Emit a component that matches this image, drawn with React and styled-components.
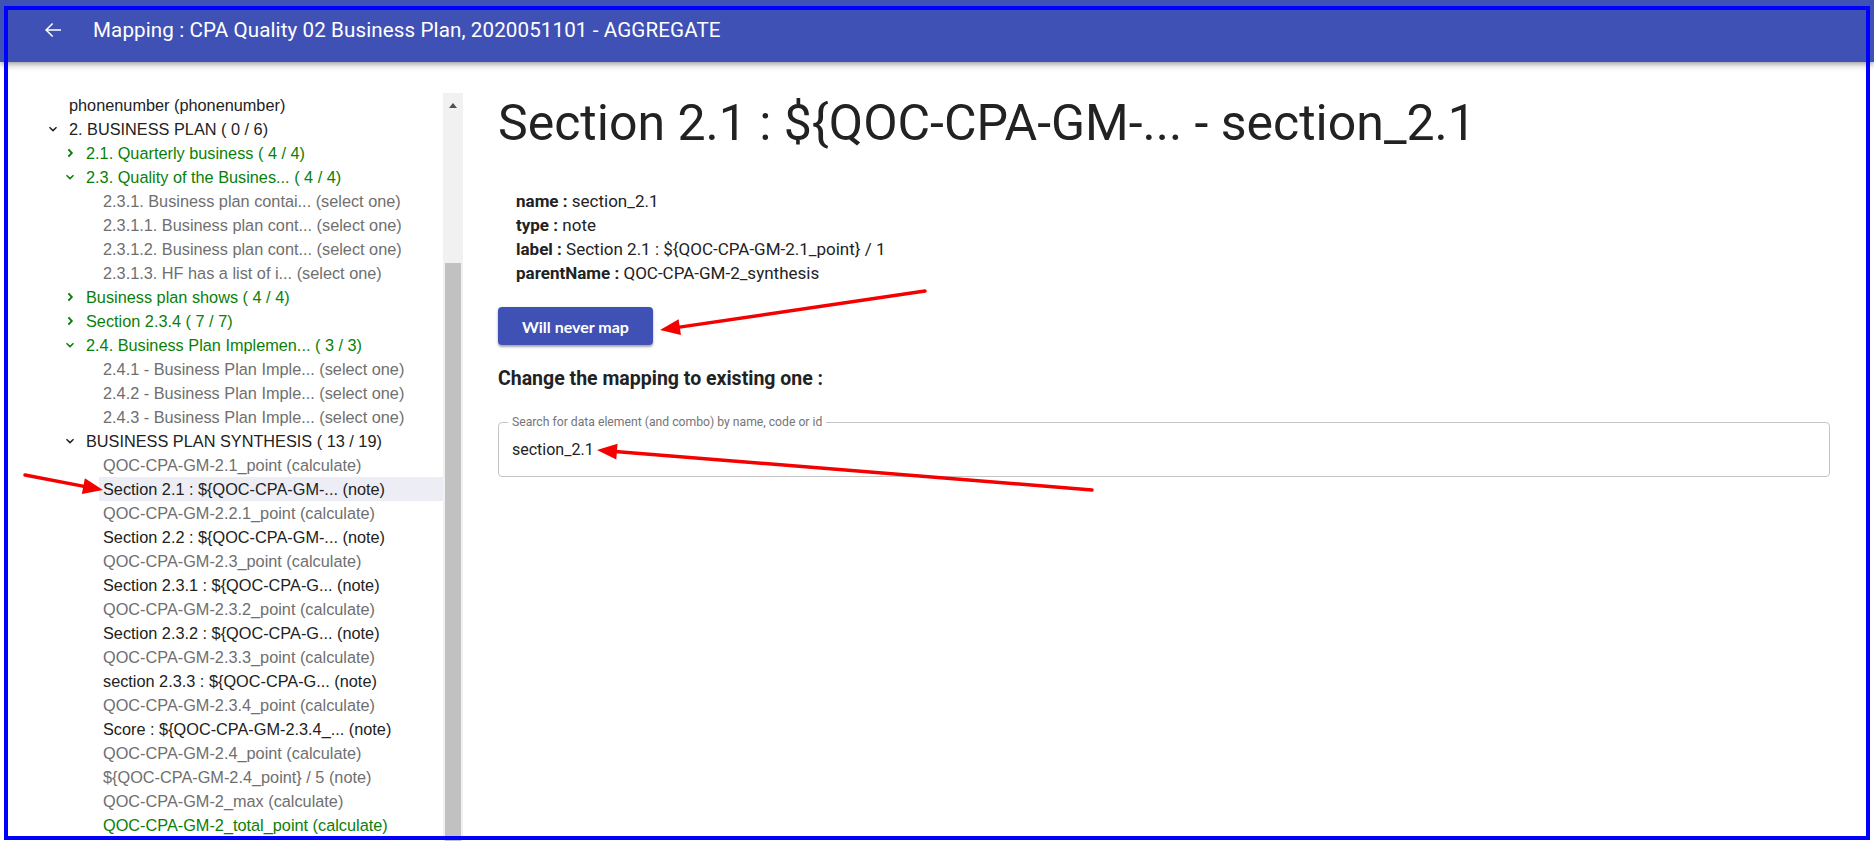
import React from 'react';
import styled, { createGlobalStyle } from 'styled-components';

const GlobalStyle = createGlobalStyle`
  html, body {
    margin: 0;
    padding: 0;
    height: 100%;
    overflow: hidden;
    background: #fff;
  }
`;

const treeRows = [
  { depth: 0, text: 'phonenumber (phonenumber)', tone: 'dark' },
  { depth: 0, text: '2. BUSINESS PLAN ( 0 / 6)', tone: 'dark', chevron: 'open' },
  { depth: 1, text: '2.1. Quarterly business ( 4 / 4)', tone: 'green', chevron: 'closed' },
  { depth: 1, text: '2.3. Quality of the Busines... ( 4 / 4)', tone: 'green', chevron: 'open' },
  { depth: 2, text: '2.3.1. Business plan contai... (select one)', tone: 'grey' },
  { depth: 2, text: '2.3.1.1. Business plan cont... (select one)', tone: 'grey' },
  { depth: 2, text: '2.3.1.2. Business plan cont... (select one)', tone: 'grey' },
  { depth: 2, text: '2.3.1.3. HF has a list of i... (select one)', tone: 'grey' },
  { depth: 1, text: 'Business plan shows ( 4 / 4)', tone: 'green', chevron: 'closed' },
  { depth: 1, text: 'Section 2.3.4 ( 7 / 7)', tone: 'green', chevron: 'closed' },
  { depth: 1, text: '2.4. Business Plan Implemen... ( 3 / 3)', tone: 'green', chevron: 'open' },
  { depth: 2, text: '2.4.1 - Business Plan Imple... (select one)', tone: 'grey' },
  { depth: 2, text: '2.4.2 - Business Plan Imple... (select one)', tone: 'grey' },
  { depth: 2, text: '2.4.3 - Business Plan Imple... (select one)', tone: 'grey' },
  { depth: 1, text: 'BUSINESS PLAN SYNTHESIS ( 13 / 19)', tone: 'dark', chevron: 'open' },
  { depth: 2, text: 'QOC-CPA-GM-2.1_point (calculate)', tone: 'grey' },
  { depth: 2, text: 'Section 2.1 : ${QOC-CPA-GM-... (note)', tone: 'dark', selected: true },
  { depth: 2, text: 'QOC-CPA-GM-2.2.1_point (calculate)', tone: 'grey' },
  { depth: 2, text: 'Section 2.2 : ${QOC-CPA-GM-... (note)', tone: 'dark' },
  { depth: 2, text: 'QOC-CPA-GM-2.3_point (calculate)', tone: 'grey' },
  { depth: 2, text: 'Section 2.3.1 : ${QOC-CPA-G... (note)', tone: 'dark' },
  { depth: 2, text: 'QOC-CPA-GM-2.3.2_point (calculate)', tone: 'grey' },
  { depth: 2, text: 'Section 2.3.2 : ${QOC-CPA-G... (note)', tone: 'dark' },
  { depth: 2, text: 'QOC-CPA-GM-2.3.3_point (calculate)', tone: 'grey' },
  { depth: 2, text: 'section 2.3.3 : ${QOC-CPA-G... (note)', tone: 'dark' },
  { depth: 2, text: 'QOC-CPA-GM-2.3.4_point (calculate)', tone: 'grey' },
  { depth: 2, text: 'Score : ${QOC-CPA-GM-2.3.4_... (note)', tone: 'dark' },
  { depth: 2, text: 'QOC-CPA-GM-2.4_point (calculate)', tone: 'grey' },
  { depth: 2, text: '${QOC-CPA-GM-2.4_point} / 5 (note)', tone: 'grey' },
  { depth: 2, text: 'QOC-CPA-GM-2_max (calculate)', tone: 'grey' },
  { depth: 2, text: 'QOC-CPA-GM-2_total_point (calculate)', tone: 'green' },
];

const details = [
  ['name', 'section_2.1'],
  ['type', 'note'],
  ['label', 'Section 2.1 : ${QOC-CPA-GM-2.1_point} / 1'],
  ['parentName', 'QOC-CPA-GM-2_synthesis'],
];

// red annotation arrows: tail -> tip
const arrows = [
  { from: [25, 475], to: [103, 490] },
  { from: [925, 291], to: [660, 330] },
  { from: [1092, 490], to: [597, 450] },
];

const toneColors = {
  dark: '#222222',
  green: '#0a7f0a',
  grey: '#6f6f6f',
};

const Chevron = ({ kind, tone }) => (
  <svg width="10" height="10" viewBox="0 0 10 10" aria-hidden="true">
    {kind === 'open' ? (
      <polyline points="1.5,3.2 5,6.6 8.5,3.2" fill="none" stroke={toneColors[tone]} strokeWidth="1.5" />
    ) : (
      <polyline points="3.4,1.4 6.8,5 3.4,8.6" fill="none" stroke={toneColors[tone]} strokeWidth="1.9" />
    )}
  </svg>
);

const Arrow = ({ from, to }) => {
  const [x1, y1] = from;
  const [x2, y2] = to;
  const len = Math.hypot(x2 - x1, y2 - y1);
  const ux = (x2 - x1) / len;
  const uy = (y2 - y1) / len;
  const bx = x2 - ux * 20;
  const by = y2 - uy * 20;
  const px = -uy * 8;
  const py = ux * 8;
  return (
    <g>
      <line x1={x1} y1={y1} x2={bx + ux * 2} y2={by + uy * 2} stroke="#f40000" strokeWidth="3.5" strokeLinecap="round" />
      <polygon points={`${x2},${y2} ${bx + px},${by + py} ${bx - px},${by - py}`} fill="#f40000" />
    </g>
  );
};

const App = () => (
  <Page>
    <GlobalStyle />
    <AppBar>
      <BackButton aria-label="back">
        <svg width="24" height="24" viewBox="0 0 24 24">
          <path d="M20 11.25H6.9l5.3-5.3-1.06-1.06L4 12l7.14 7.11 1.06-1.06-5.3-5.3H20z" fill="#fff" />
        </svg>
      </BackButton>
      <BarTitle>Mapping : CPA Quality 02 Business Plan, 2020051101 - AGGREGATE</BarTitle>
    </AppBar>

    <Main>
      <TreePanel>
        <TreeList>
          {treeRows.map((row, i) => (
            <TreeRow key={i} depth={row.depth}>
              <ChevronSlot>{row.chevron && <Chevron kind={row.chevron} tone={row.tone} />}</ChevronSlot>
              <RowLabel tone={row.tone} selected={row.selected}>
                {row.text}
              </RowLabel>
            </TreeRow>
          ))}
        </TreeList>
        <ScrollTrack>
          <ScrollArrow />
          <ScrollThumb />
        </ScrollTrack>
      </TreePanel>

      <Content>
        <Heading>{'Section 2.1 : ${QOC-CPA-GM-... - section_2.1'}</Heading>
        <DetailList>
          {details.map(([key, value]) => (
            <DetailLine key={key}>
              <strong>{key} :</strong> {value}
            </DetailLine>
          ))}
        </DetailList>
        <NeverMapButton type="button">Will never map</NeverMapButton>
        <SubTitle>Change the mapping to existing one :</SubTitle>
        <SearchField>
          <legend>Search for data element (and combo) by name, code or id</legend>
          <SearchValue>section_2.1</SearchValue>
        </SearchField>
      </Content>
    </Main>

    <Annotations width="1874" height="841">
      {arrows.map((a, i) => (
        <Arrow key={i} {...a} />
      ))}
    </Annotations>
    <Frame />
  </Page>
);

const Page = styled.div`
  position: relative;
  height: 100vh;
  display: flex;
  flex-direction: column;
  overflow: hidden;
  font-family: Roboto, "Liberation Sans", Arial, sans-serif;
`;

const AppBar = styled.header`
  height: 62px;
  flex-shrink: 0;
  display: flex;
  align-items: center;
  padding-left: 41px;
  gap: 28px;
  background: #3f51b5;
  color: #fff;
  box-shadow: 0 2px 4px -1px rgba(0, 0, 0, 0.2), 0 4px 5px 0 rgba(0, 0, 0, 0.14), 0 1px 10px 0 rgba(0, 0, 0, 0.12);
  position: relative;
  z-index: 1;
`;

const BackButton = styled.button`
  display: flex;
  padding: 0;
  border: none;
  background: transparent;
  margin-top: -2px;
`;

const BarTitle = styled.h1`
  margin: 0;
  margin-top: -2px;
  font-size: 20.6px;
  font-weight: 400;
  letter-spacing: 0.1px;
`;

const Main = styled.main`
  flex: 1;
  min-height: 0;
  display: flex;
`;

const TreePanel = styled.nav`
  width: 463px;
  flex-shrink: 0;
  margin-top: 31px;
  display: flex;
  overflow: hidden;
`;

const TreeList = styled.ul`
  flex: 1;
  margin: 0;
  padding: 0;
  list-style: none;
  font-family: "Liberation Sans", Arial, sans-serif;
  font-size: 16.3px;
`;

const TreeRow = styled.li`
  height: 24px;
  display: flex;
  align-items: center;
  padding-left: ${({ depth }) => 44 + depth * 17}px;
`;

const ChevronSlot = styled.span`
  width: 17px;
  flex-shrink: 0;
  display: flex;
  justify-content: center;
  margin-right: 4px;
`;

const RowLabel = styled.span`
  flex: 1;
  height: 24px;
  line-height: 24px;
  padding-left: 4px;
  white-space: nowrap;
  color: ${({ tone }) => toneColors[tone]};
  background: ${({ selected }) => (selected ? '#ededf5' : 'transparent')};
`;

const ScrollTrack = styled.div`
  width: 20px;
  flex-shrink: 0;
  background: #f1f1f1;
  display: flex;
  flex-direction: column;
  align-items: center;
`;

const ScrollArrow = styled.span`
  margin-top: 10px;
  width: 0;
  height: 0;
  border-left: 4.5px solid transparent;
  border-right: 4.5px solid transparent;
  border-bottom: 5px solid #505050;
`;

const ScrollThumb = styled.span`
  margin-top: 155px;
  width: 16px;
  flex: 1;
  background: #c1c1c1;
`;

const Content = styled.section`
  flex: 1;
  min-width: 0;
  padding: 33px 44px 0 35px;
  color: #212121;
`;

const Heading = styled.h2`
  margin: 0;
  font-size: 50px;
  font-weight: 400;
  line-height: 56px;
  color: #222;
`;

const DetailList = styled.div`
  margin-top: 38px;
  padding-left: 18px;
`;

const DetailLine = styled.div`
  font-size: 17px;
  line-height: 24px;
  color: #222;

  strong {
    font-weight: 700;
  }
`;

const NeverMapButton = styled.button`
  display: block;
  margin-top: 22px;
  width: 155px;
  height: 38px;
  border: none;
  border-radius: 4px;
  background: #3f51b5;
  color: #fff;
  font-family: Lato, "Liberation Sans", sans-serif;
  font-weight: 700;
  font-size: 16px;
  box-shadow: 0 2px 2px rgba(0, 0, 0, 0.28), 0 1px 4px rgba(0, 0, 0, 0.12);
`;

const SubTitle = styled.h3`
  margin: 22px 0 0;
  font-size: 19.5px;
  font-weight: 700;
  line-height: 24px;
  color: #222;
`;

const SearchField = styled.fieldset`
  margin: 24px 0 0;
  padding: 0 13px 0 9px;
  border: 1px solid #c4c4c4;
  border-radius: 4px;

  legend {
    padding: 0 4px;
    font-size: 12.2px;
    line-height: 14px;
    color: #757575;
  }
`;

const SearchValue = styled.div`
  padding: 9px 0 14px 4px;
  font-size: 16px;
  line-height: 24px;
  color: #222;
`;

const Annotations = styled.svg`
  position: absolute;
  inset: 0;
  pointer-events: none;
  z-index: 2;
`;

const Frame = styled.div`
  position: absolute;
  left: 4px;
  top: 6px;
  width: 1866px;
  height: 834px;
  box-sizing: border-box;
  border: 4px solid #0000ff;
  pointer-events: none;
  z-index: 3;
`;

export default App;
